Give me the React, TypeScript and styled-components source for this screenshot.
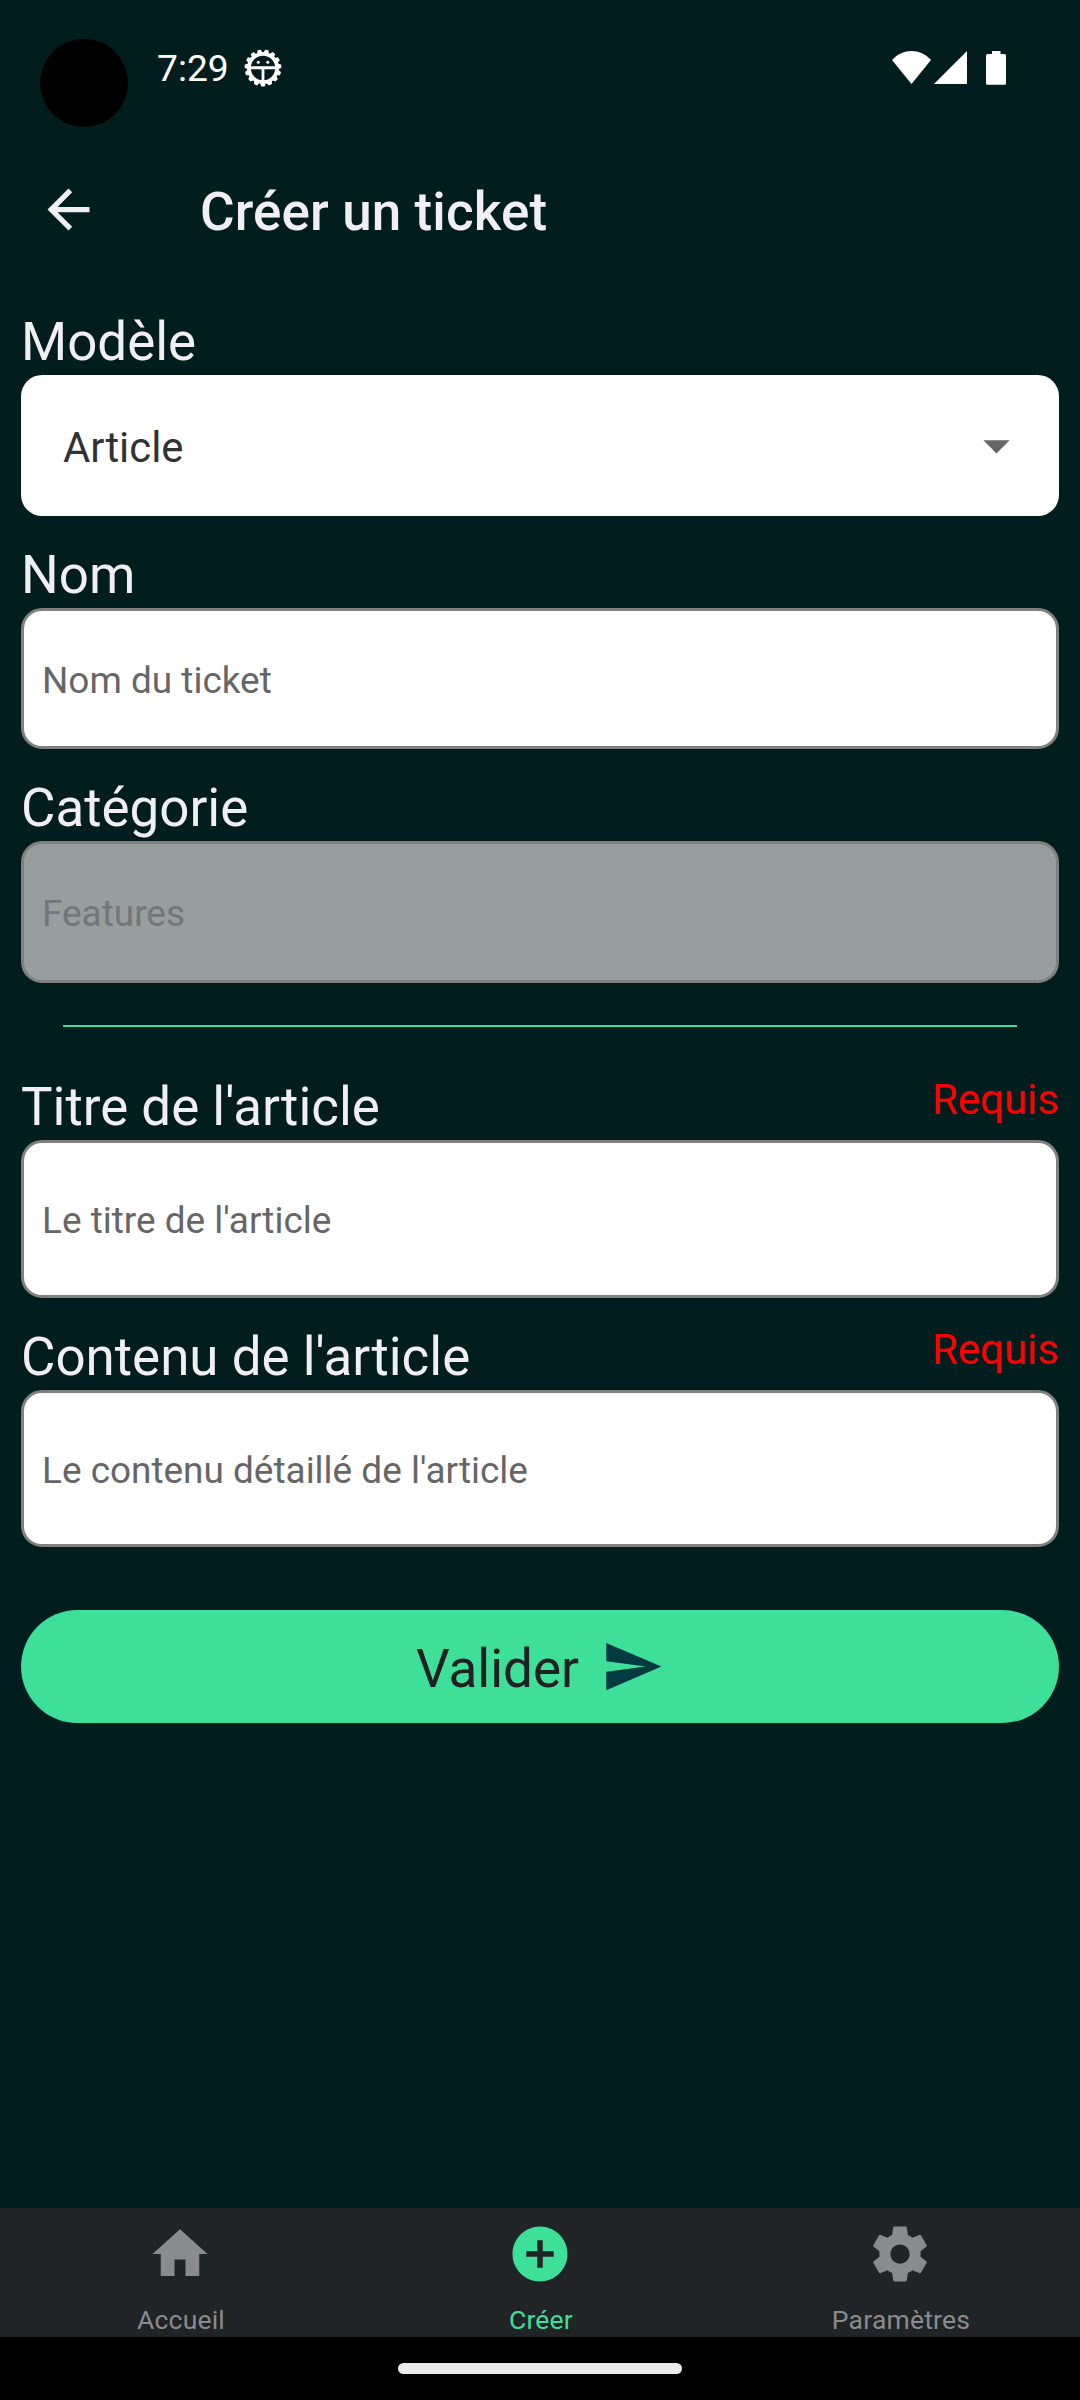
import React from 'react';
import styled, { createGlobalStyle } from 'styled-components';

const GlobalStyle = createGlobalStyle`
  * { box-sizing: border-box; }
  body { margin: 0; background: #021d1e; }
`;

const Screen = styled.div`
  width: 1080px;
  height: 2400px;
  display: flex;
  flex-direction: column;
  background: #021d1e;
  color: #f0eff4;
  font-family: Roboto, "Noto Sans", sans-serif;
  overflow: hidden;
`;

const StatusBar = styled.header`
  height: 136px;
  display: flex;
  align-items: flex-start;
  padding: 39px 74px 0 40px;
  color: #ffffff;
`;

const CameraCutout = styled.div`
  width: 88px;
  height: 88px;
  border-radius: 50%;
  background: #000000;
`;

const Clock = styled.time`
  margin: 8px 0 0 29px;
  width: 72px;
  font-size: 37.2px;
  line-height: 43px;
  white-space: nowrap;
`;

const BugIcon = styled.svg`
  margin: 10px 0 0 15px;
  width: 38px;
  height: 38px;
`;

const SystemIcons = styled.div`
  margin: 12px 0 0 auto;
  display: flex;
  align-items: flex-start;
`;

const WifiIcon = styled.svg`
  width: 39px;
  height: 33px;
`;

const SignalIcon = styled.svg`
  width: 33px;
  height: 33px;
  margin-left: 3px;
`;

const BatteryIcon = styled.svg`
  width: 20px;
  height: 34px;
  margin-left: 19px;
`;

const AppBar = styled.div`
  height: 147px;
  display: flex;
  align-items: center;
  padding: 0 37px;
`;

const BackIcon = styled.svg`
  width: 63px;
  height: 63px;
`;

const Title = styled.h1`
  margin: 4px 0 0 100px;
  font-size: 53px;
  font-weight: 500;
  line-height: 62px;
  letter-spacing: 0.1px;
  white-space: nowrap;
`;

const Form = styled.main`
  flex: 1;
  display: flex;
  flex-direction: column;
  padding: 30px 21px 0;
`;

const Field = styled.section`
  margin-bottom: 30px;
`;

const LabelRow = styled.div`
  height: 62px;
  display: flex;
  justify-content: space-between;
  align-items: flex-start;
`;

const Label = styled.label`
  font-size: 52.9px;
  line-height: 58px;
  white-space: nowrap;
`;

const Required = styled.span`
  font-size: 42px;
  line-height: 43px;
  color: #ff0000;
`;

const SelectBox = styled.div`
  height: 141px;
  display: flex;
  align-items: center;
  justify-content: space-between;
  padding: 0 31px 0 42px;
  border-radius: 21px;
  background: #ffffff;
  color: #323232;
  font-size: 41.8px;
`;

const SelectValue = styled.span`
  padding-top: 3px;
`;

const CaretIcon = styled.svg`
  width: 63px;
  height: 63px;
`;

const TextBox = styled.div<{ $height?: number; $disabled?: boolean }>`
  height: ${(p) => p.$height ?? 141}px;
  display: flex;
  align-items: center;
  padding: 3px 18px 0;
  border: 3px solid #808080;
  border-radius: 21px;
  background: ${(p) => (p.$disabled ? '#989d9f' : '#ffffff')};
  color: ${(p) => (p.$disabled ? '#727777' : '#666666')};
  font-size: 36.95px;
  white-space: nowrap;
`;

const Divider = styled.hr`
  width: 954px;
  height: 2px;
  margin: 12px auto 51px;
  border: 0;
  background: #3ddf99;
`;

const SubmitButton = styled.button`
  height: 113px;
  margin: 33px 0 0;
  padding: 0;
  display: flex;
  align-items: center;
  justify-content: center;
  gap: 22px;
  border: 0;
  border-radius: 57px;
  background: #3ddf99;
  color: #212121;
  font-family: inherit;
  font-size: 53px;
  line-height: 62px;
`;

const SubmitText = styled.span`
  padding-top: 5px;
`;

const SendIcon = styled.svg`
  width: 63px;
  height: 63px;
`;

const TabBar = styled.nav`
  height: 129px;
  display: grid;
  grid-template-columns: repeat(3, 1fr);
  background: #202427;
`;

const Tab = styled.div<{ $active?: boolean }>`
  display: flex;
  flex-direction: column;
  align-items: center;
  padding-top: 13px;
  color: ${(p) => (p.$active ? '#3ddf99' : '#8a8b8e')};
`;

const TabIcon = styled.svg`
  width: 66px;
  height: 66px;
  flex: none;
`;

const TabLabel = styled.span`
  margin-top: 17px;
  padding-left: 2px;
  font-size: 26.5px;
  line-height: 31px;
  letter-spacing: 0.2px;
`;

const GestureArea = styled.footer`
  height: 63px;
  display: flex;
  justify-content: center;
  padding-top: 26px;
  background: #000000;
`;

const GestureHandle = styled.div`
  width: 284px;
  height: 11px;
  border-radius: 6px;
  background: #ebebeb;
`;

const TEETH = Array.from({ length: 15 }, (_, i) => i * 24 + 12);

const tabs = [
  { name: 'Accueil', path: 'M10 20v-6h4v6h5v-8h3L12 3 2 12h3v8z' },
  {
    name: 'Créer',
    active: true,
    path: 'M12 2C6.48 2 2 6.48 2 12s4.48 10 10 10 10-4.48 10-10S17.52 2 12 2zm5 11h-4v4h-2v-4H7v-2h4V7h2v4h4v2z',
  },
  {
    name: 'Paramètres',
    path: 'M19.43 12.98c.04-.32.07-.64.07-.98s-.03-.66-.07-.98l2.11-1.65c.19-.15.24-.42.12-.64l-2-3.46c-.12-.22-.39-.3-.61-.22l-2.49 1c-.52-.4-1.08-.73-1.69-.98l-.38-2.65C14.46 2.18 14.25 2 14 2h-4c-.25 0-.46.18-.49.42l-.38 2.65c-.61.25-1.17.59-1.69.98l-2.49-1c-.23-.09-.49 0-.61.22l-2 3.46c-.13.22-.07.49.12.64l2.11 1.65c-.04.32-.07.65-.07.98s.03.66.07.98l-2.11 1.65c-.19.15-.24.42-.12.64l2 3.46c.12.22.39.3.61.22l2.49-1c.52.4 1.08.73 1.69.98l.38 2.65c.03.24.24.42.49.42h4c.25 0 .46-.18.49-.42l.38-2.65c.61-.25 1.17-.59 1.69-.98l2.49 1c.23.09.49 0 .61-.22l2-3.46c.12-.22.07-.49-.12-.64l-2.11-1.65zM12 15.5c-1.93 0-3.5-1.57-3.5-3.5s1.57-3.5 3.5-3.5 3.5 1.57 3.5 3.5-1.57 3.5-3.5 3.5z',
  },
];

export default function App() {
  return (
    <>
      <GlobalStyle />
      <Screen>
        <StatusBar>
          <CameraCutout />
          <Clock>7:29</Clock>
          <BugIcon viewBox="-19 -19 38 38" fill="#fff">
            {TEETH.map((a) => (
              <path key={a} d="M-3.2 -14L-1.7 -18.4H1.7L3.2 -14z" transform={`rotate(${a})`} />
            ))}
            <circle r="14.1" fill="none" stroke="#fff" strokeWidth="3.8" />
            <path d="M-13 -1.8H13V1.2H1.4V13H-1.4V1.2H-13z" />
            <circle cx="-4.8" cy="-5.8" r="1.5" />
            <circle cx="4.8" cy="-5.8" r="1.5" />
          </BugIcon>
          <SystemIcons>
            <WifiIcon viewBox="0 0 39 33" fill="#fff">
              <path d="M0 9C11 -3 28 -3 39 9L19.5 33z" />
            </WifiIcon>
            <SignalIcon viewBox="0 0 33 33" fill="#fff">
              <path d="M0 33L33 0V33z" />
            </SignalIcon>
            <BatteryIcon viewBox="0 0 20 34" fill="#fff">
              <path d="M6 0H14.5V3H18.5Q20 3 20 4.5V32.3Q20 33.8 18.5 33.8H1.5Q0 33.8 0 32.3V4.5Q0 3 1.5 3H6z" />
            </BatteryIcon>
          </SystemIcons>
        </StatusBar>
        <AppBar>
          <BackIcon viewBox="0 0 24 24" fill="currentColor">
            <path d="M20 11H7.83l5.59-5.59L12 4l-8 8 8 8 1.41-1.41L7.83 13H20v-2z" />
          </BackIcon>
          <Title>Créer un ticket</Title>
        </AppBar>
        <Form>
          <Field>
            <LabelRow>
              <Label>Modèle</Label>
            </LabelRow>
            <SelectBox>
              <SelectValue>Article</SelectValue>
              <CaretIcon viewBox="0 0 24 24" fill="#666666">
                <path d="M7 10l5 5 5-5z" />
              </CaretIcon>
            </SelectBox>
          </Field>
          <Field>
            <LabelRow>
              <Label>Nom</Label>
            </LabelRow>
            <TextBox>Nom du ticket</TextBox>
          </Field>
          <Field>
            <LabelRow>
              <Label>Catégorie</Label>
            </LabelRow>
            <TextBox $disabled $height={142}>Features</TextBox>
          </Field>
          <Divider />
          <Field>
            <LabelRow>
              <Label>Titre de l'article</Label>
              <Required>Requis</Required>
            </LabelRow>
            <TextBox $height={158}>Le titre de l'article</TextBox>
          </Field>
          <Field>
            <LabelRow>
              <Label>Contenu de l'article</Label>
              <Required>Requis</Required>
            </LabelRow>
            <TextBox $height={157}>Le contenu détaillé de l'article</TextBox>
          </Field>
          <SubmitButton>
            <SubmitText>Valider</SubmitText>
            <SendIcon viewBox="0 0 24 24" fill="#033b41">
              <path d="M2.01 21L23 12 2.01 3 2 10l15 2-15 2z" />
            </SendIcon>
          </SubmitButton>
        </Form>
        <TabBar>
          {tabs.map((tab) => (
            <Tab key={tab.name} $active={tab.active}>
              <TabIcon viewBox="0 0 24 24" fill="currentColor">
                <path d={tab.path} />
              </TabIcon>
              <TabLabel>{tab.name}</TabLabel>
            </Tab>
          ))}
        </TabBar>
        <GestureArea>
          <GestureHandle />
        </GestureArea>
      </Screen>
    </>
  );
}
